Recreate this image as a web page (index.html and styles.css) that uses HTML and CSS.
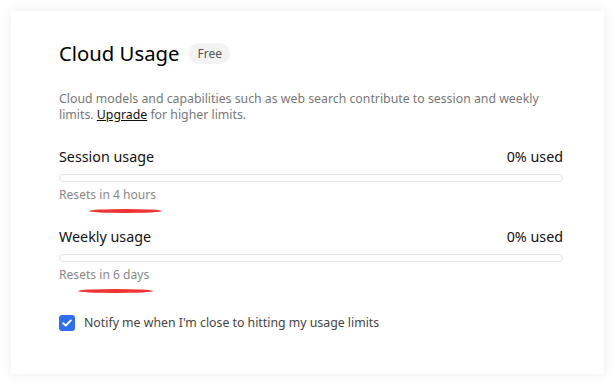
FILE: index.html
```html
<!DOCTYPE html>
<html lang="en">
<head>
    <meta charset="UTF-8">
    <meta name="viewport" content="width=device-width, initial-scale=1.0">
    <title>Cloud Usage</title>
    <link rel="stylesheet" href="styles.css">
</head>
<body>
    <div class="card">
        <div class="title-row">
            <h1>Cloud Usage</h1>
            <span class="badge">Free</span>
        </div>

        <p class="desc">Cloud models and capabilities such as web search contribute to session and weekly limits. <a href="#">Upgrade</a> for higher limits.</p>

        <div class="usage">
            <div class="usage-head">
                <span>Session usage</span>
                <span>0% used</span>
            </div>
            <div class="bar"><div class="fill" style="width: 0%"></div></div>
            <div class="resets">Resets <span class="mark mark-hours">in 4 hours</span></div>
        </div>

        <div class="usage">
            <div class="usage-head">
                <span>Weekly usage</span>
                <span>0% used</span>
            </div>
            <div class="bar"><div class="fill" style="width: 0%"></div></div>
            <div class="resets">Resets <span class="mark mark-days">in 6 days</span></div>
        </div>

        <label class="notify">
            <span class="check">
                <svg width="10" height="8" viewBox="0 0 10 8"><path d="M1.2 4.2 L3.8 6.6 L8.8 1.4" fill="none" stroke="#fff" stroke-width="1.9" stroke-linecap="round" stroke-linejoin="round"/></svg>
            </span>
            Notify me when I'm close to hitting my usage limits
        </label>
    </div>
</body>
</html>
```

FILE: styles.css
```css
body {
    margin: 0;
    padding: 11px;
    background: #fff;
    font-family: 'Noto Sans', 'Open Sans', sans-serif;
    color: #111;
}

.card {
    width: 593px;
    height: 363px;
    box-sizing: border-box;
    padding: 28px 41px 0 48px;
    background: #fff;
    box-shadow: 0 0 12px rgba(0, 0, 0, 0.08);
}

.title-row {
    display: flex;
    align-items: center;
    gap: 10px;
}

h1 {
    margin: 0;
    font-size: 20.3px;
    font-weight: 400;
    color: #000;
}

.badge {
    padding: 2px 8px;
    background: #f3f3f3;
    border-radius: 10px;
    font-size: 12px;
    color: #555;
}

.desc {
    margin: 24px 0 0;
    font-size: 12.3px;
    line-height: 16px;
    color: #777;
}

.desc a {
    color: #111;
    text-decoration: underline;
}

.usage {
    margin-top: 24px;
}

.usage + .usage {
    margin-top: 24px;
}

.usage-head {
    display: flex;
    justify-content: space-between;
    font-size: 14.3px;
    color: #111;
}

.bar {
    margin-top: 8px;
    height: 6px;
    border: 1px solid #e4e4e4;
    border-radius: 4px;
    background: #fff;
}

.fill {
    height: 100%;
    background: #2f6fed;
}

.resets {
    margin-top: 4px;
    font-size: 12.1px;
    color: #888;
}

.mark {
    position: relative;
}

/* red hand-drawn underline */
.mark::after {
    content: '';
    position: absolute;
    bottom: -10px;
    height: 4px;
    background: #ee3333;
    border-radius: 50%;
}

.mark-hours::after {
    left: -10px;
    right: -6px;
}

.mark-days::after {
    left: -21px;
    right: -4px;
}

.notify {
    margin-top: 31px;
    display: flex;
    align-items: center;
    gap: 9px;
    font-size: 12.3px;
    color: #444;
}

.check {
    width: 16px;
    height: 16px;
    border-radius: 3px;
    background: #2f6fed;
    display: flex;
    align-items: center;
    justify-content: center;
}
```
